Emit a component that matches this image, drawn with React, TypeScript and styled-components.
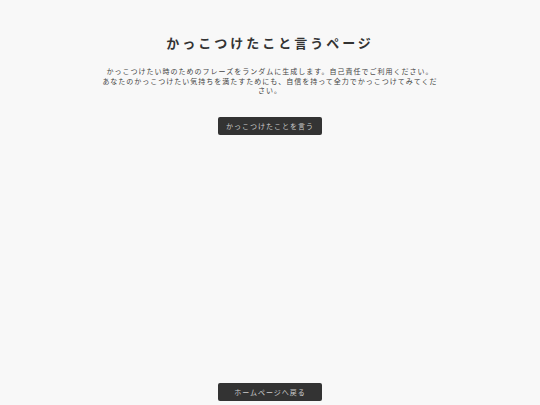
import React, { FC } from 'react';
import styled, { createGlobalStyle } from 'styled-components';

const GlobalStyle = createGlobalStyle`
    html, body {
        margin: 0;
        padding: 0;
        background: #f8f8f8;
    }
    body {
        font-family: "Noto Sans CJK JP", "Noto Sans", sans-serif;
        color: #333;
    }
`;

const App: FC = () => {
    return (
        <>
            <GlobalStyle />
            <Page>
                <Main>
                    <Title>かっこつけたこと言うページ</Title>
                    <Description>
                        かっこつけたい時のためのフレーズをランダムに生成します。自己責任でご利用ください。
                        <br />
                        あなたのかっこつけたい気持ちを満たすためにも、自信を持って全力でかっこつけてみてください。
                    </Description>
                    <Button>かっこつけたことを言う</Button>
                </Main>
                <Footer>
                    <Button>ホームページへ戻る</Button>
                </Footer>
            </Page>
        </>
    );
};
export default App;

const Page = styled.div`
    display: flex;
    flex-direction: column;
    min-height: 100vh;
    box-sizing: border-box;
`;

const Main = styled.main`
    flex: 1;
    display: flex;
    flex-direction: column;
    align-items: center;
    padding-top: 33px;
`;

const Title = styled.h1`
    margin: 0;
    font-size: 13px;
    font-weight: 700;
    letter-spacing: 3px;
    line-height: 20px;
    color: #333;
`;

const Description = styled.p`
    margin: 14px 0 0;
    width: 340px;
    text-align: center;
    font-size: 7px;
    letter-spacing: 1px;
    line-height: 9.5px;
    color: #444;
`;

const Button = styled.button`
    margin-top: 21px;
    width: 104px;
    height: 18px;
    padding: 0;
    border: none;
    border-radius: 2px;
    background: #333;
    color: #ccc;
    font-family: inherit;
    font-size: 7px;
    letter-spacing: 1px;
    cursor: pointer;
`;

const Footer = styled.footer`
    display: flex;
    justify-content: center;
    padding-bottom: 4px;

    & > button {
        margin-top: 0;
    }
`;
